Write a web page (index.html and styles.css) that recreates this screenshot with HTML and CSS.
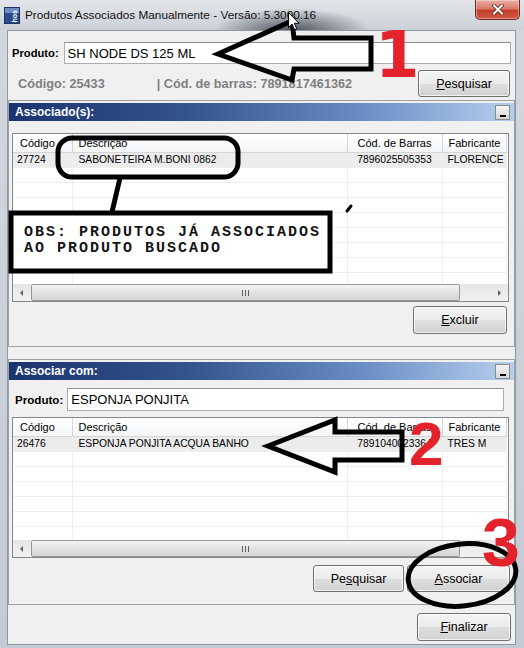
FILE: index.html
```html
<!DOCTYPE html>
<html lang="pt-BR">
<head>
  <meta charset="UTF-8">
  <meta name="viewport" content="width=device-width, initial-scale=1.0">
  <title>Produtos Associados Manualmente</title>
  <link rel="stylesheet" href="styles.css">
</head>
<body>

<div class="window">
  <div class="titlebar">
    <svg class="app-icon" width="16" height="17" viewBox="0 0 16 17">
      <rect x="0.5" y="0.5" width="15" height="16" fill="#2e4c8c" stroke="#1c3263"/>
      <rect x="1" y="1" width="14" height="5" fill="#6d8cc4"/>
      <text class="app-icon-text" transform="translate(12.5 15.5) rotate(-90)">hos</text>
    </svg>
    <span class="title">Produtos Associados Manualmente - Versão: 5.3000.16</span>
    <div class="close-btn">
      <svg width="12" height="11" viewBox="0 0 12 11">
        <path d="M2 1.5 L10 9.5 M10 1.5 L2 9.5" stroke="#5b2019" stroke-width="3.6" stroke-linecap="square"/>
        <path d="M2 1.5 L10 9.5 M10 1.5 L2 9.5" stroke="#fff" stroke-width="2" stroke-linecap="square"/>
      </svg>
    </div>
  </div>

  <div class="client">
    <div class="field-row top-field">
      <label class="field-label">Produto:</label>
      <input class="text-input" type="text" value="SH NODE DS 125 ML" readonly>
    </div>

    <div class="info-row">
      <span class="info-code">Código: 25433</span>
      <span class="info-barcode">| Cód. de barras: 7891817461362</span>
      <button class="btn btn-search"><u>P</u>esquisar</button>
    </div>

    <!-- produtos ja associados -->
    <div class="group">
      <div class="group-head">
        <span>Associado(s):</span>
        <span class="min-btn"></span>
      </div>
      <div class="grid grid-associated">
        <div class="grid-body">
          <table>
            <colgroup>
              <col class="col-code"><col class="col-desc"><col class="col-bar"><col class="col-fab">
            </colgroup>
            <thead>
              <tr><th>Código</th><th>Descrição</th><th class="center">Cód. de Barras</th><th>Fabricante</th></tr>
            </thead>
            <tbody>
              <tr class="selected"><td>27724</td><td>SABONETEIRA M.BONI 0862</td><td class="center">7896025505353</td><td>FLORENCE</td></tr>
              <tr><td></td><td></td><td></td><td></td></tr>
              <tr><td></td><td></td><td></td><td></td></tr>
              <tr><td></td><td></td><td></td><td></td></tr>
              <tr><td></td><td></td><td></td><td></td></tr>
              <tr><td></td><td></td><td></td><td></td></tr>
              <tr><td></td><td></td><td></td><td></td></tr>
              <tr><td></td><td></td><td></td><td></td></tr>
              <tr><td></td><td></td><td></td><td></td></tr>
            </tbody>
          </table>
        </div>
        <div class="hscroll">
          <span class="scroll-arrow"><i class="tri tri-left"></i></span>
          <span class="scroll-thumb"><i class="grip"></i></span>
          <span class="scroll-track"></span>
          <span class="scroll-arrow"><i class="tri tri-right"></i></span>
        </div>
      </div>
      <div class="actions">
        <button class="btn btn-delete"><u>E</u>xcluir</button>
      </div>
    </div>

    <!-- busca de produto para associar -->
    <div class="group">
      <div class="group-head">
        <span>Associar com:</span>
        <span class="min-btn"></span>
      </div>
      <div class="field-row group-field">
        <label class="field-label">Produto:</label>
        <input class="text-input" type="text" value="ESPONJA PONJITA" readonly>
      </div>
      <div class="grid grid-search">
        <div class="grid-body">
          <table>
            <colgroup>
              <col class="col-code"><col class="col-desc"><col class="col-bar"><col class="col-fab">
            </colgroup>
            <thead>
              <tr><th>Código</th><th>Descrição</th><th class="center">Cód. de Barras</th><th>Fabricante</th></tr>
            </thead>
            <tbody>
              <tr class="selected"><td>26476</td><td>ESPONJA PONJITA ACQUA BANHO</td><td class="center">7891040023364</td><td>TRES M</td></tr>
              <tr><td></td><td></td><td></td><td></td></tr>
              <tr><td></td><td></td><td></td><td></td></tr>
              <tr><td></td><td></td><td></td><td></td></tr>
              <tr><td></td><td></td><td></td><td></td></tr>
              <tr><td></td><td></td><td></td><td></td></tr>
              <tr><td></td><td></td><td></td><td></td></tr>
            </tbody>
          </table>
        </div>
        <div class="hscroll">
          <span class="scroll-arrow"><i class="tri tri-left"></i></span>
          <span class="scroll-thumb"><i class="grip"></i></span>
          <span class="scroll-track"></span>
          <span class="scroll-arrow"><i class="tri tri-right"></i></span>
        </div>
      </div>
      <div class="actions">
        <button class="btn btn-find">Pe<u>s</u>quisar</button>
        <button class="btn btn-link"><u>A</u>ssociar</button>
      </div>
    </div>

    <div class="footer">
      <button class="btn btn-finish"><u>F</u>inalizar</button>
    </div>
  </div>

  <!-- anotacoes desenhadas por cima da tela -->
  <svg class="markup" width="524" height="648" viewBox="0 0 524 648">
    <g fill="none" stroke="#000" stroke-width="5">
      <polygon points="218,54 292,21 294,38 371,38 371,69 294,69 292,80"/>
      <rect x="58" y="138" width="180" height="39" rx="14"/>
      <line x1="120" y1="178" x2="112" y2="212"/>
      <polygon points="268,446 335,420 335,432 402,432 402,460 335,460 335,472"/>
      <ellipse cx="462" cy="575" rx="54" ry="31" transform="rotate(-6 462 575)"/>
    </g>
    <rect x="11" y="213" width="319" height="58" fill="#fff" stroke="#000" stroke-width="5"/>
    <text class="obs" x="24" y="236">OBS: PRODUTOS JÁ ASSOCIADOS</text>
    <text class="obs" x="24" y="252">AO PRODUTO BUSCADO</text>
    <line x1="347" y1="211" x2="351" y2="206" stroke="#000" stroke-width="3" stroke-linecap="round"/>
    <text class="mark mark-one" x="375" y="77">1</text>
    <text class="mark" x="409" y="465">2</text>
    <text class="mark mark-three" x="482" y="566">3</text>
    <path class="cursor" d="M288.5 12.5 v15 l3.5 -3.4 l2.6 5.6 l2.2 -1 l-2.5 -5.4 h4.8 z"/>
  </svg>
</div>

</body>
</html>
```

FILE: styles.css
```css
* { box-sizing: border-box; }

body {
  margin: 0;
  font-family: "Liberation Sans", Arial, sans-serif;
  font-size: 12px;
  color: #000;
}

.window {
  position: relative;
  width: 524px;
  height: 648px;
  display: flex;
  flex-direction: column;
  background: linear-gradient(to bottom, #d3d8df, #c3cad3);
  overflow: hidden;
}

/* barra de titulo */
.titlebar {
  height: 30px;
  flex: none;
  display: flex;
  align-items: flex-start;
  padding-left: 4px;
  background:
    radial-gradient(ellipse 80px 24px at 292px 32px, rgba(35, 40, 50, 0.78), rgba(35, 40, 50, 0)),
    linear-gradient(to bottom, #e3e6ea, #ccd1d8);
}
.app-icon { margin-top: 7px; flex: none; }
.app-icon-text { font: bold 7px "Liberation Sans", sans-serif; fill: #fff; }
.title {
  margin: 8px 0 0 5px;
  font-size: 11.8px;
  line-height: 15px;
  color: #111;
  white-space: nowrap;
}
.close-btn {
  margin-left: auto;
  margin-right: 4px;
  width: 45px;
  height: 20px;
  display: flex;
  align-items: center;
  justify-content: center;
  border: 1px solid #6a2a22;
  border-top: none;
  border-radius: 0 0 5px 5px;
  background: linear-gradient(to bottom, #eab0a4 0%, #d9796a 45%, #c43f2c 55%, #d25a45 100%);
  box-shadow: inset 0 0 0 1px rgba(255, 255, 255, 0.35);
}

/* area do formulario */
.client {
  flex: 1;
  margin: 0 8px 3px 7px;
  border: 1px solid #8d98a6;
  background: #f0f0f0;
  display: flex;
  flex-direction: column;
}

.field-row { display: flex; align-items: center; gap: 5px; }
.field-label { font-weight: bold; font-size: 11.2px; }
.text-input {
  flex: 1;
  height: 100%;
  min-width: 0;
  border: 1px solid #abadb3;
  border-top-color: #8e8f8f;
  background: #fff;
  font: 13px "Liberation Sans", Arial, sans-serif;
  color: #000;
  padding: 0 3px;
  outline: none;
}
.top-field { height: 22px; margin: 11px 4px 0 4px; }
.group-field { height: 23px; margin: 8px 10px 0 6px; gap: 4px; }
.group-field .field-label { font-size: 11.6px; }

.info-row {
  display: flex;
  align-items: center;
  height: 27px;
  margin: 6px 5px 0 10px;
  font-weight: bold;
  font-size: 12.7px;
  color: #808080;
}
.info-barcode { margin-left: 52px; }

.btn {
  height: 27px;
  padding: 0;
  border: 1px solid #707070;
  border-radius: 3px;
  background: linear-gradient(to bottom, #f3f3f3 0%, #ececec 50%, #dfdfdf 51%, #d2d2d2 100%);
  box-shadow: inset 0 0 0 1px rgba(255, 255, 255, 0.7);
  font: 12.5px "Liberation Sans", Arial, sans-serif;
  color: #000;
}
.btn-search { margin-left: auto; width: 92px; }
.btn-delete, .btn-finish { width: 94px; height: 28px; }
.btn-find { width: 91px; }
.btn-link { width: 103px; }

/* grupos com cabecalho azul */
.group {
  margin-top: 3px;
  border: 1px solid #a0a0a0;
  padding: 2px 0 12px;
}
.group + .group { margin-top: 12px; }
.group-head {
  height: 18px;
  display: flex;
  align-items: center;
  justify-content: space-between;
  padding: 0 4px 0 6px;
  background: linear-gradient(to right, #1b3470 0%, #33538e 35%, #6a8dc5 70%, #b6cfed 100%);
  color: #fff;
  font-weight: bold;
  font-size: 12px;
}
.min-btn {
  position: relative;
  width: 15px;
  height: 15px;
  border: 1px solid #8a8a8a;
  background: linear-gradient(to bottom, #f4f4f4, #d6d6d6);
}
.min-btn::after {
  content: "";
  position: absolute;
  left: 4px;
  bottom: 2px;
  width: 6px;
  height: 2px;
  background: #000;
}

.grid {
  margin: 12px 5px 0 3px;
  border: 1px solid #828790;
  background: #fff;
  display: flex;
  flex-direction: column;
}
.grid-associated { height: 169px; }
.grid-search { height: 141px; margin-top: 6px; }
.grid-body { flex: 1; min-height: 0; overflow: hidden; }

.grid table {
  width: 493px;
  table-layout: fixed;
  border-collapse: collapse;
}
.col-code { width: 59px; }
.col-desc { width: 275px; }
.col-bar { width: 95px; }
.col-fab { width: 64px; }

.grid th {
  height: 18px;
  padding: 0 6px;
  border-right: 1px solid #d5d5d5;
  border-bottom: 1px solid #d5d5d5;
  background: linear-gradient(to bottom, #ffffff, #f4f5f7);
  font-size: 11px;
  font-weight: normal;
  text-align: left;
  white-space: nowrap;
  overflow: hidden;
}
.grid th:first-child { padding-left: 7px; }
.grid td {
  height: 15px;
  padding: 0 5px;
  border-right: 1px solid #efefef;
  border-bottom: 1px solid #efefef;
  font-size: 10.3px;
  line-height: 14px;
  white-space: nowrap;
  overflow: hidden;
}
.grid td:first-child { padding-left: 4px; }
.grid td:nth-child(2) { padding-left: 6px; }
.grid .center { text-align: center; padding: 0; }
.grid tr.selected td { background: #ececec; }

/* barra de rolagem horizontal */
.hscroll {
  height: 17px;
  flex: none;
  display: flex;
  background: linear-gradient(to bottom, #e6e6e6, #f2f2f2);
}
.scroll-arrow {
  width: 17px;
  display: flex;
  align-items: center;
  justify-content: center;
}
.tri { width: 0; height: 0; border-top: 3px solid transparent; border-bottom: 3px solid transparent; }
.tri-left { border-right: 3px solid #606060; }
.tri-right { border-left: 3px solid #606060; }
.scroll-thumb {
  width: 429px;
  margin: 0 0 0 1px;
  display: flex;
  align-items: center;
  justify-content: center;
  border: 1px solid #979797;
  border-radius: 2px;
  background: linear-gradient(to bottom, #f5f5f5, #e2e2e2 50%, #d6d6d6);
}
.grip {
  width: 7px;
  height: 6px;
  background: repeating-linear-gradient(to right, #5f5f5f 0 1px, transparent 1px 3px);
}
.scroll-track { flex: 1; }

.actions {
  display: flex;
  justify-content: flex-end;
  gap: 3px;
  margin: 4px 7px 0 0;
}
.group + .group .actions { margin: 7px 4px 0 0; }

.footer {
  display: flex;
  justify-content: flex-end;
  margin: 8px 4px 0 0;
}

/* anotacoes */
.markup {
  position: absolute;
  top: 0;
  left: 0;
  pointer-events: none;
}
.markup .obs {
  font: bold 15px "Liberation Mono", monospace;
  letter-spacing: 2px;
  fill: #151515;
}
.markup .mark {
  font: bold 62px "Liberation Sans", Arial, sans-serif;
  fill: #e3222b;
}
.markup .mark-one { font-family: "DejaVu Sans", sans-serif; font-size: 64px; }
.markup .mark-three { font-size: 68px; }
.markup .cursor { fill: #fff; stroke: #000; stroke-width: 1; }
```
